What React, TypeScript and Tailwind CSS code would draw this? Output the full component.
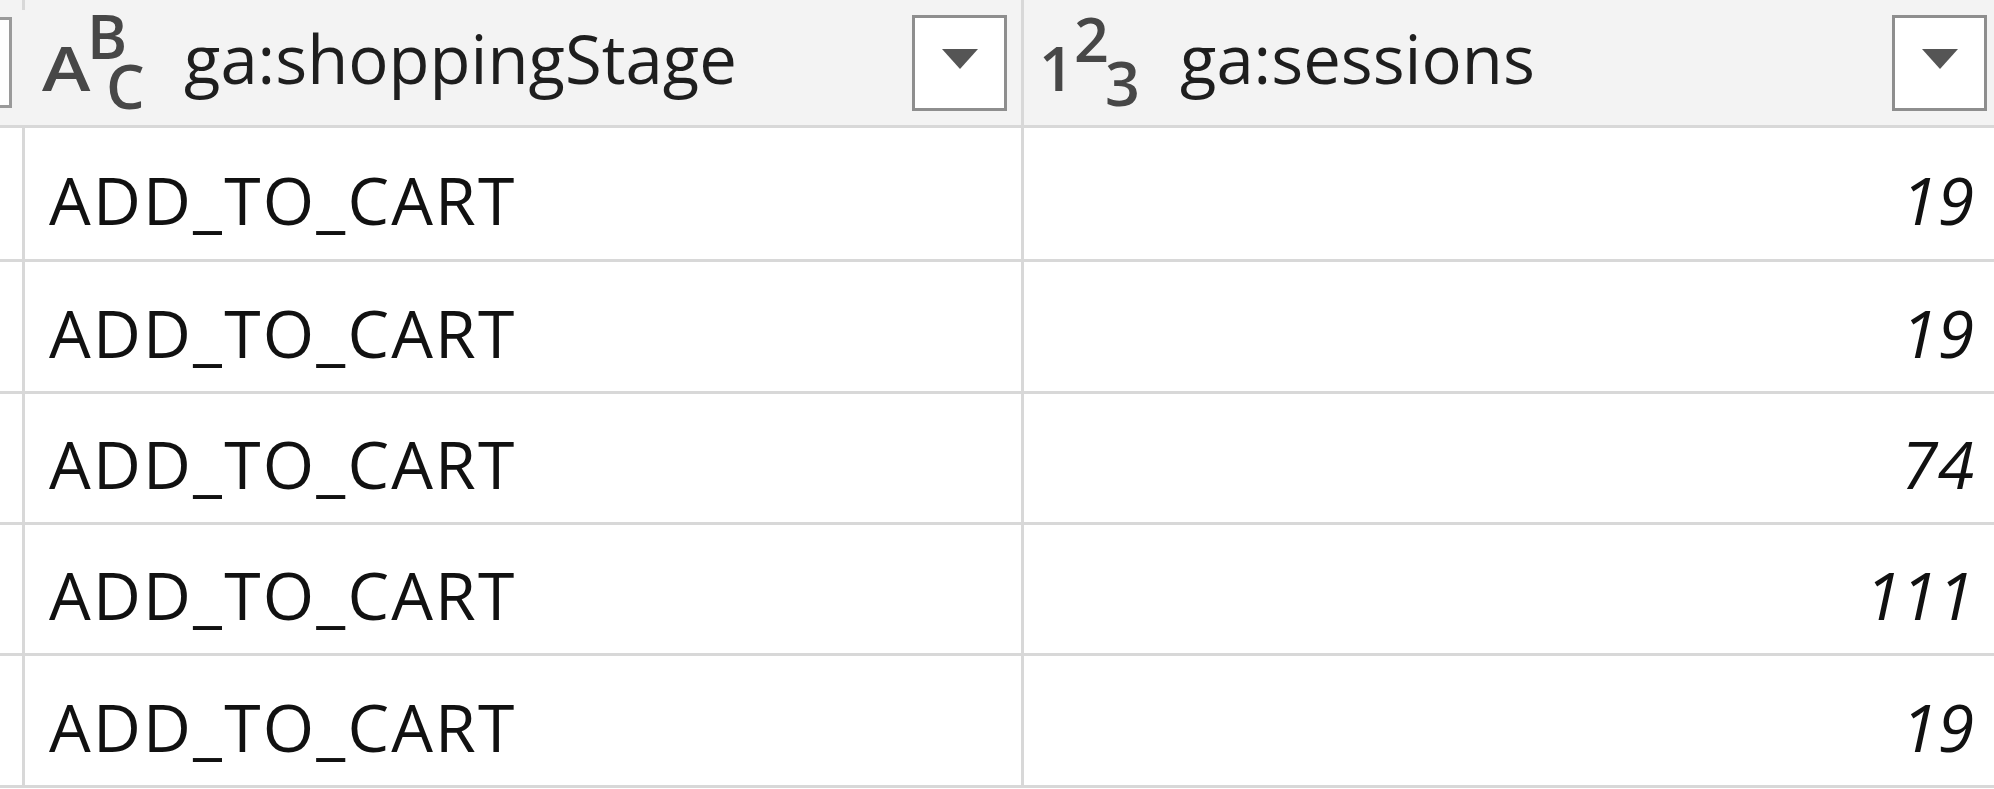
import React from "react";

const rows = [
  { stage: "ADD_TO_CART", sessions: "19", h: "h-[134px]" },
  { stage: "ADD_TO_CART", sessions: "19", h: "h-[132px]" },
  { stage: "ADD_TO_CART", sessions: "74", h: "h-[131px]" },
  { stage: "ADD_TO_CART", sessions: "111", h: "h-[131px]" },
  { stage: "ADD_TO_CART", sessions: "19", h: "h-[132px]" },
];

function DropBox() {
  return (
    <div className="w-[95px] h-[96px] shrink-0 border-[3px] border-[#8e8e8e] bg-white flex items-center justify-center">
      <svg width="36" height="20" viewBox="0 0 36 20" className="mb-[8px]">
        <polygon points="0,0 36,0 18,20" fill="#555555" />
      </svg>
    </div>
  );
}

function AbcIcon() {
  return (
    <svg width="145" height="125" viewBox="0 0 145 125" className="shrink-0">
      <g fill="#474747" fontFamily="'Open Sans', sans-serif" fontSize="61" fontWeight="600">
        <text transform="translate(3,91) scale(1.2,1)">A</text>
        <text x="48" y="59">B</text>
        <text x="67" y="109">C</text>
      </g>
    </svg>
  );
}

function NumIcon() {
  return (
    <svg width="142" height="125" viewBox="0 0 142 125" className="shrink-0">
      <g fill="#474747" fontFamily="'Open Sans', sans-serif" fontSize="61" fontWeight="600">
        <text x="1" y="91">1</text>
        <text x="36" y="62">2</text>
        <text x="67" y="106">3</text>
      </g>
    </svg>
  );
}

export default function App() {
  return (
    <div
      className="w-[1994px] h-[789px] overflow-hidden bg-white text-[#111111]"
      style={{ fontFamily: "'Open Sans', 'Noto Sans', sans-serif" }}
    >
      {/* header */}
      <div className="flex h-[128px] bg-[#f3f3f3] border-b-[3px] border-[#d8d8d8]">
        <div className="w-[22px] shrink-0 overflow-hidden flex justify-end items-start pt-[17px] pr-[10px]">
          <div className="w-[95px] h-[91px] shrink-0 border-[3px] border-[#9a9a9a] bg-white" />
        </div>
        <div className="w-[3px] shrink-0 flex flex-col">
          <div className="h-[10px] bg-[#d8d8d8]" />
        </div>
        <div className="w-[996px] shrink-0 flex items-center pl-[14px] pr-[14px]">
          <AbcIcon />
          <span className="text-[67px] leading-none text-[#1e1e1e] pb-[8px]">ga:shoppingStage</span>
          <div className="flex-1" />
          <DropBox />
        </div>
        <div className="w-[3px] shrink-0 bg-[#d8d8d8]" />
        <div className="flex-1 flex items-center pl-[14px] pr-[7px]">
          <NumIcon />
          <span className="text-[67px] leading-none text-[#1e1e1e] pb-[8px]">ga:sessions</span>
          <div className="flex-1" />
          <DropBox />
        </div>
      </div>
      {/* rows */}
      {rows.map((r, i) => (
        <div key={i} className={`flex ${r.h} border-b-[3px] border-[#d8d8d8]`}>
          <div className="w-[22px] shrink-0" />
          <div className="w-[3px] shrink-0 bg-[#d8d8d8]" />
          <div className="w-[996px] shrink-0 flex items-center pl-[24px] pt-[10px]">
            <span className="text-[66px] leading-none tracking-[2.2px]">{r.stage}</span>
          </div>
          <div className="w-[3px] shrink-0 bg-[#d8d8d8]" />
          <div className="flex-1 flex items-center justify-end pr-[20px] pt-[10px]">
            <span className="text-[66px] leading-none italic">{r.sessions}</span>
          </div>
        </div>
      ))}
    </div>
  );
}
